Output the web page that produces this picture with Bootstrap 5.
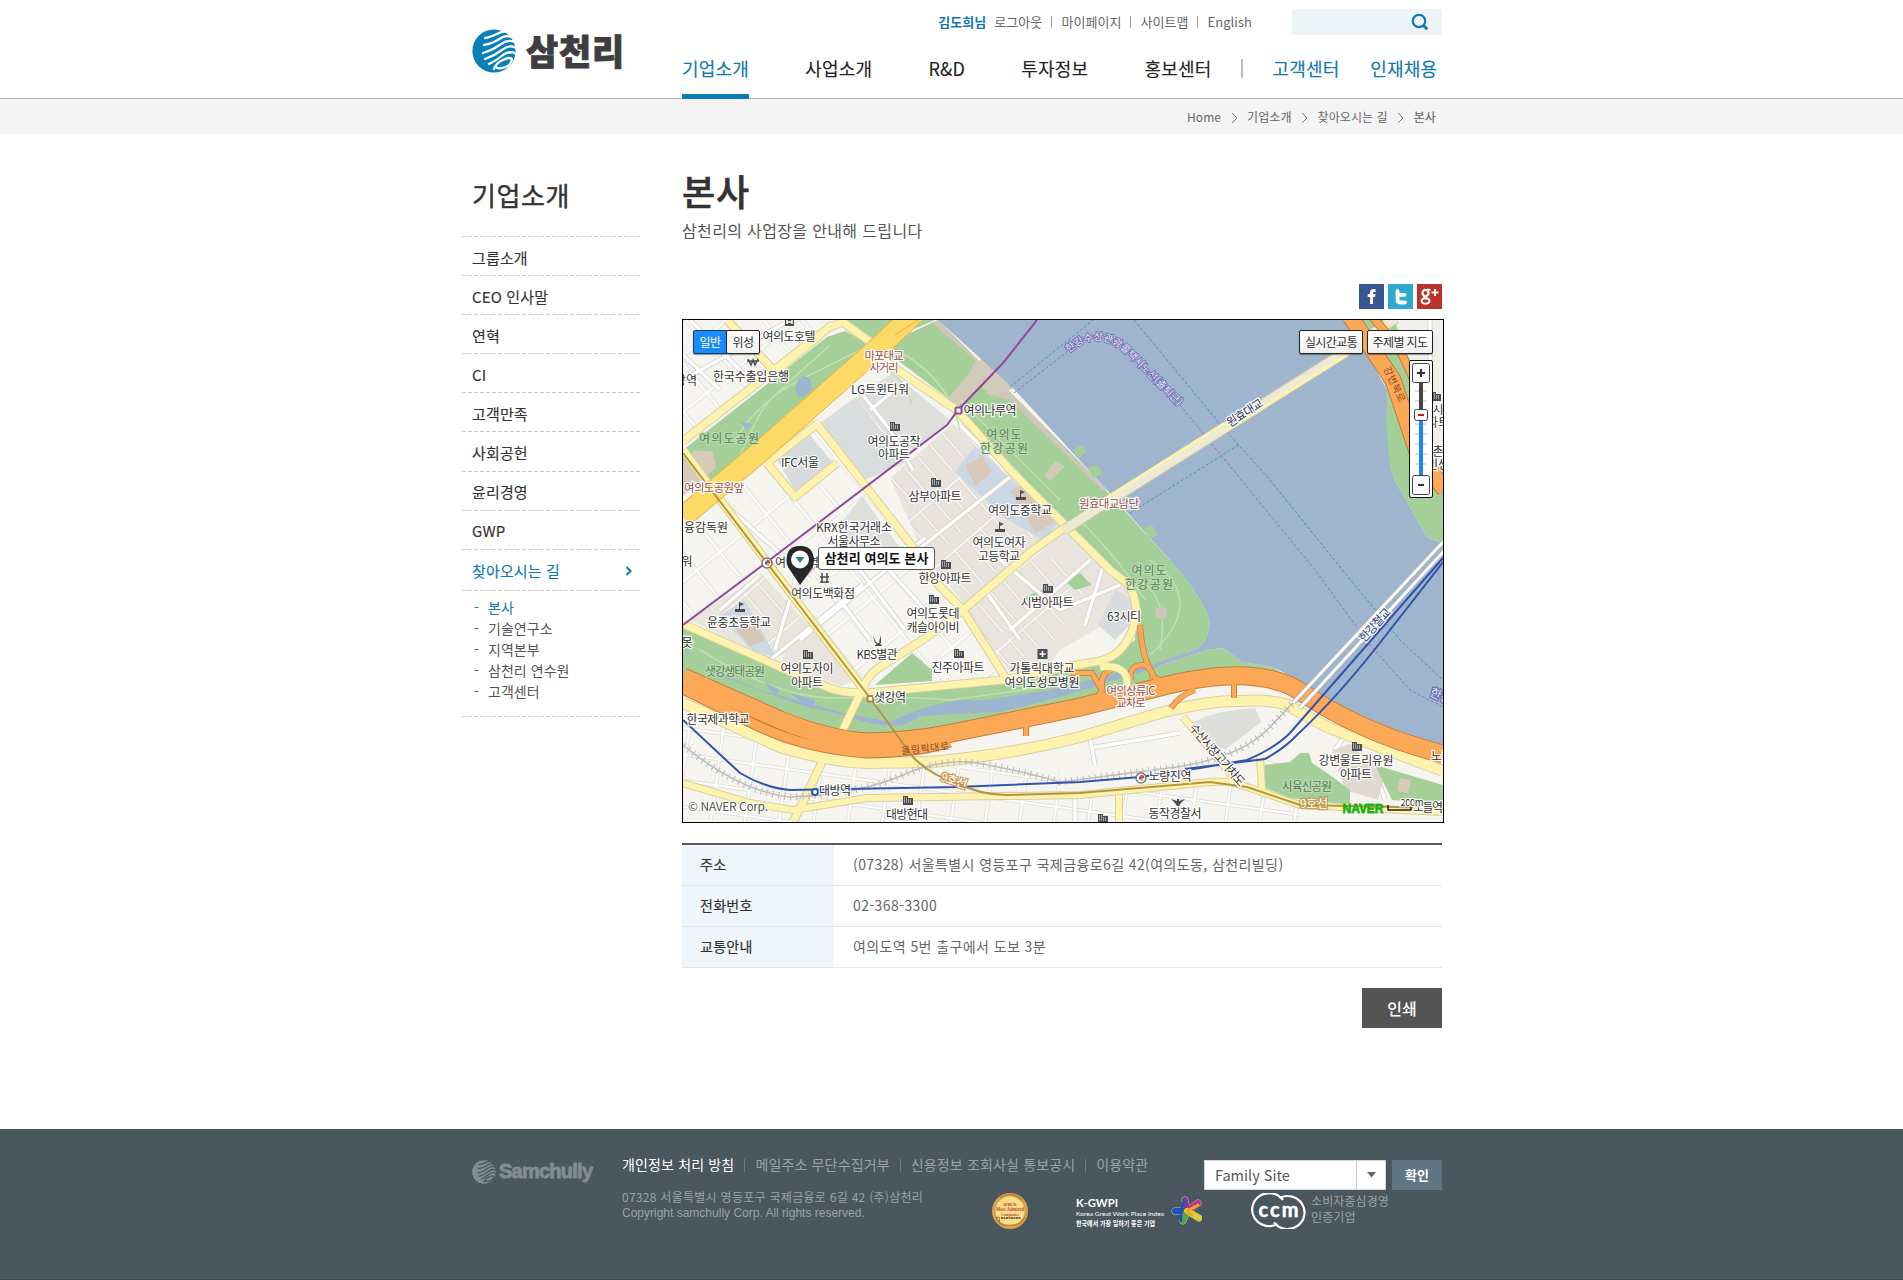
<!DOCTYPE html>
<html lang="ko">
<head>
<meta charset="utf-8">
<title>본사 | 삼천리</title>
<meta name="viewport" content="width=device-width, initial-scale=1">
<link rel="stylesheet" href="https://cdn.jsdelivr.net/npm/bootstrap@5.3.0/dist/css/bootstrap.min.css">
<style>
body{font-family:"Noto Sans CJK KR","Liberation Sans",sans-serif;color:#333;line-height:1.2;overflow-x:hidden;font-size:14px}
a{text-decoration:none;color:inherit}
.wrap{width:980px;margin-left:calc(50% - 489.5px);white-space:nowrap}
.med{-webkit-text-stroke:.15px currentColor}
.blue{color:#0f78b2}
.site-head{height:99px;border-bottom:1px solid #b3b1b4}
.brand{width:220px;padding:29px 0 0 10px}
.brand-name{font-weight:900;font-size:35px;letter-spacing:.8px;color:#3e3e40;-webkit-text-stroke:.9px #3e3e40;line-height:42px;margin-left:10px}
.util{height:44px;font-size:13px;color:#666;letter-spacing:.05px}
.util i{width:1px;height:12px;background:#999;margin:0 9px}
.search{width:150px;height:26px;background:#edf4f8;margin-left:40px;padding-right:13px}
.gnb{height:54px;font-size:18px;letter-spacing:.2px;color:#222}
.gnb a{height:55px;padding-top:14px;margin-right:56.2px}
.gnb .on{border-bottom:5px solid #0a7cb8}
.gnb i{width:2px;height:19px;background:#bbb;margin:15px 30px 0 0}
.crumbs{height:35px;background:#f4f4f4;font-size:12px;color:#666;letter-spacing:.08px}
.crumbs .wrap{height:37px;padding-right:6px}
.crumbs svg{margin:0 9.5px}
.side{width:178px;padding-top:44px;flex:none}
.side h2{font-size:26px;font-weight:400;height:58px;margin:0;padding-left:10px;line-height:34px;letter-spacing:.6px;-webkit-text-stroke:.4px #333}
.menu a{display:flex;align-items:center;justify-content:space-between;height:39.1px;padding:3px 7px 0 10px;font-size:15px;letter-spacing:.15px;line-height:1}
.dash,.menu a{background:repeating-linear-gradient(90deg,#c9c9c9 0 4px,transparent 4px 6px) 0 0/100% 1px no-repeat}
.sub{height:126px;padding:7px 0 0 12px;line-height:21.1px;font-size:14px;color:#555;letter-spacing:.05px}
.sub span{display:inline-block;width:14px}
.shut{height:1px}
.main{width:762px;margin-left:42px;padding-top:33px;flex:none}
.main h1{font-size:36px;font-weight:500;margin:0;line-height:46px;height:52px;-webkit-text-stroke:.6px #333;letter-spacing:1px}
.leadin{font-size:16px;letter-spacing:.35px;color:#555;line-height:22px;height:65px}
.social{gap:4px;padding-right:2px;height:35px}
.map{width:762px;height:504px;border:1px solid #000;position:relative;background:#f5f4ee;overflow:hidden}
.map>svg{display:block}
.mbtn{position:absolute;height:24px;top:10px;border:1px solid #222;background:linear-gradient(#fff,#f0f0f2);font-size:12px;letter-spacing:-.6px;line-height:21px;text-align:center;border-radius:2px;box-shadow:0 1px 1px #0006}
.mbtn.sel{background:#1a8cfa;color:#fff;border-color:#123d75;border-radius:2px 0 0 2px}
.zoombar{position:absolute;left:726px;top:40px;width:24px;height:138px;background:#fff;border:1px solid #111;border-radius:2px}
.tip{position:absolute;left:135px;top:227px;width:117px;height:23px;border:1px solid #555;border-radius:3px;background:#fff;font-size:13px;font-weight:700;line-height:20px;text-align:center;color:#111;letter-spacing:.1px}
.info{width:760px;border-top:2px solid #5a5a5c;margin-top:20px}
.info .line-item{height:41px;border-bottom:1px solid #e2e4e6}
.info b{width:152px;background:#eff5fa;padding-left:18px;font-weight:400;-webkit-text-stroke:.2px #333;height:40px;line-height:39px;letter-spacing:.3px}
.info span{padding-left:19px;color:#666;line-height:39px;letter-spacing:.4px}
.print{width:80px;height:40px;background:#545454;color:#fff;font-size:16px;font-weight:500;border-radius:0;border:0;padding:0;margin:20px 2px 0 0}
.foot{margin-top:101px;height:151px;background:#4a575f;color:#9aa3a8;border-bottom:1px solid #3e484e}
.flogo{width:160px;padding:31px 0 0 10px}
.fname{font:700 20px "Liberation Sans",sans-serif;color:#818c93;-webkit-text-stroke:.9px #818c93;margin-left:3px;letter-spacing:-.75px}
.flinks{height:17px;margin-top:27px;letter-spacing:.15px}
.flinks i{width:1px;height:13px;background:#6f7b82;margin:3px 10px 0}
.faddr{font-size:12px;line-height:16px;margin-top:16px;letter-spacing:.28px}
.copy{font-family:"Liberation Sans",sans-serif;font-size:12px;letter-spacing:0}
.fam{width:182px;height:30px;background:#fff;border:1px solid #cfd5d8;color:#555;font-size:14.5px;padding-left:10px}
.fam div{width:29px;border-left:1px solid #ccc;height:28px}
.okbtn{width:50px;height:30px;background:#607684;color:#fff;font-size:13px;font-weight:700;border:0;border-radius:0;padding:0;margin-left:6px}
/* map layers */
.cs,.fl{fill:none;stroke-linejoin:round;stroke-linecap:butt}
.cs{stroke:#d9cfa0}.fl{stroke:#fdf3ae}
.st{fill:none;stroke:#d2d0ca;stroke-width:5}.stw{fill:none;stroke:#fff;stroke-width:3.4}
.lb text{font-size:12px;fill:#333;stroke:#fff;stroke-width:2.6px;stroke-opacity:.85;paint-order:stroke;text-anchor:middle}
.lb .g{fill:#55805c;stroke:#c5dfb8;stroke-opacity:.6}
.lb .r{fill:#96504f;font-size:11.5px}
</style>
<script src="https://cdn.jsdelivr.net/npm/bootstrap@5.3.0/dist/js/bootstrap.bundle.min.js"></script>
</head>
<body>
<svg width="0" height="0" class="position-absolute"><defs>
<symbol id="globe" viewBox="0 0 44 44"><circle cx="22" cy="22" r="21.6" fill="currentColor"/>
<g fill="none" stroke="var(--gap,#fff)" stroke-width="2.3" stroke-linecap="round"><path d="M13 9Q19 8 27 4Q31 2 35 3"/><path d="M12 16Q22 14 29 9Q34 6 39 8"/><path d="M11 24Q21 21 29 15Q36 10 43 13"/><path d="M13 30Q22 27 30 21Q37 15 44 19"/><path d="M17 35Q24 32 31 26Q38 21 45 25"/><path d="M22 40Q24 34 31 31Q39 27 40 31Q38 38 30 39Q25 40 24 38"/></g></symbol>
</defs></svg>

<header class="site-head"><div class="wrap d-flex">
  <a class="brand d-flex" href="#"><svg width="44" height="44" style="color:#087fb9"><use href="#globe"/></svg><span class="brand-name">삼천리</span></a>
  <div class="flex-grow-1">
    <div class="util d-flex align-items-center justify-content-end"><b class="blue me-2">김도희님</b><a href="#">로그아웃</a><i></i><a href="#">마이페이지</a><i></i><a href="#">사이트맵</a><i></i><a href="#">English</a>
      <div class="search d-flex align-items-center justify-content-end"><svg width="18" height="18" viewBox="0 0 18 18" fill="none" stroke="#0f7cb6"><circle cx="8" cy="8" r="6.2" stroke-width="2.2"/><path d="M12 12l4.3 4.3" stroke-width="3"/></svg></div></div>
    <nav class="gnb d-flex med"><a class="on blue" href="#">기업소개</a><a href="#">사업소개</a><a href="#">R&amp;D</a><a href="#">투자정보</a><a class="me-0" href="#">홍보센터</a><i style="margin-left:29px"></i><a class="blue" style="margin-right:30.500px" href="#">고객센터</a><a class="blue me-0" href="#">인재채용</a></nav>
  </div>
</div></header>

<div class="crumbs"><div class="wrap d-flex align-items-center justify-content-end">
<span>Home</span><svg width="7" height="10"><path d="M1 0l5 5-5 5" fill="none" stroke="#777"/></svg><span>기업소개</span><svg width="7" height="10"><path d="M1 0l5 5-5 5" fill="none" stroke="#777"/></svg><span>찾아오시는 길</span><svg width="7" height="10"><path d="M1 0l5 5-5 5" fill="none" stroke="#777"/></svg><span class="med">본사</span>
</div></div>

<div class="wrap d-flex">
  <aside class="side">
    <h2>기업소개</h2>
    <nav class="menu med"><a href="#">그룹소개</a><a href="#">CEO 인사말</a><a href="#">연혁</a><a href="#">CI</a><a href="#">고객만족</a><a href="#">사회공헌</a><a href="#">윤리경영</a><a href="#">GWP</a><a class="blue" href="#" style="height:41px">찾아오시는 길<svg width="8" height="10"><path d="M1.5 1l4 4-4 4" fill="none" stroke="#0f78b2" stroke-width="2"/></svg></a></nav>
    <div class="sub dash"><div class="blue"><span>-</span>본사</div><div><span>-</span>기술연구소</div><div><span>-</span>지역본부</div><div><span>-</span>삼천리 연수원</div><div><span>-</span>고객센터</div></div>
    <div class="shut dash"></div>
  </aside>
  <main class="main">
    <h1>본사</h1>
    <div class="leadin">삼천리의 사업장을 안내해 드립니다</div>
    <div class="social d-flex justify-content-end">
      <svg width="25" height="25"><rect width="25" height="25" fill="#3a5795"/><path d="M11 20v-7H8.700V10H11V8.500Q11 5 14.500 5H16.500V8H15Q14 8 14 9V10H16.500L16 13H14V20Z" fill="#fff"/></svg>
      <svg width="25" height="25"><rect width="25" height="25" fill="#2da9d2"/><path d="M9.500 7V15.500Q9.500 18.500 12.500 18.500H17M9.500 10.800H16.500" fill="none" stroke="#fff" stroke-width="3.800" stroke-linecap="round"/></svg>
      <svg width="25" height="25"><rect width="25" height="25" fill="#b93329"/><g fill="none" stroke="#fff"><ellipse cx="8.500" cy="9" rx="3" ry="3.200" stroke-width="2.200"/><ellipse cx="8.500" cy="17" rx="4" ry="2.700" stroke-width="2"/><path d="M8 12Q5.500 13.500 9.500 14.500M10 5.800H13.500M14.500 8.500H21.500M18 5V12" stroke-width="2"/></g></svg>
    </div>
    <div class="map">
<svg width="760" height="502" viewBox="683 320 760 502">
<defs>
<pattern id="gridA" width="30" height="44" patternUnits="userSpaceOnUse" patternTransform="rotate(-39)"><path d="M0 2H30M2 0V44" stroke="#cfcdc7" stroke-width="4.400"/><path d="M0 2H30M2 0V44" stroke="#fff" stroke-width="2.800"/></pattern>
<pattern id="gridB" width="17" height="52" patternUnits="userSpaceOnUse" patternTransform="rotate(-41)"><path d="M0 2H17M2 0V44" stroke="#d3cec6" stroke-width="3"/><path d="M0 2H17M2 0V44" stroke="#f7f5f0" stroke-width="1.800"/></pattern>
<pattern id="gridC" width="34" height="26" patternUnits="userSpaceOnUse" patternTransform="rotate(8)"><path d="M0 2H34M2 0V26" stroke="#cfcdc7" stroke-width="4"/><path d="M0 2H34M2 0V26" stroke="#fff" stroke-width="2.600"/></pattern>
<path id="peri" d="M827 328L843 322L877 347L893 367L957 410L1013 473L1063 523L1110 570L1127 583Q1140 600 1134 625Q1125 655 1100 661L1060 668L1003 680L867 693Q840 693 827 687L780 667L683 624"/>
<path id="r2" d="M1067 526L1033 550L963 610L927 637L877 669Q866 678 862 690L838 740M822 762L804 800L793 822"/>
<path id="r3" d="M817 424L863 483L913 547L927 573L963 610L1007 680M767 463L795 497L837 463M767 463L817 424M683 441L832 325M727 320L775 372L820 335"/>
<path id="r4" d="M683 703L780 747Q830 762 867 763L930 762Q1010 755 1080 737L1160 713Q1210 700 1240 701Q1270 699 1287 705L1327 727L1443 771"/>
<path id="r5" d="M683 783L750 803L793 810L867 798L1080 795L1210 782Q1230 780 1247 787L1300 805L1443 812M1260 757L1262 790M1183 717L1240 785M1119 795V822"/>
<path id="hw" d="M683 677L780 720Q830 740 867 742Q910 741 947 734L1080 707L1160 687Q1210 674 1247 676Q1275 678 1293 687L1327 708Q1380 738 1443 754"/>
<path id="hw2" d="M683 689L750 722Q800 748 867 753Q920 752 950 742"/>
<path id="ramp" d="M1140 625Q1142 660 1155 678L1175 688M1153 678Q1152 666 1142 665Q1128 666 1131 680M1070 673H1092L1102 690Q1100 672 1112 670M1102 690L1098 697M1234 684V698M1171 708Q1180 695 1195 690M1026 720V736"/>
<path id="rail" d="M1427 560L1293 703L1267 730Q1240 757 1177 767L1060 782Q1010 768 970 762Q940 760 910 772Q860 795 790 797Q740 792 683 745"/>
</defs>
<rect x="683" y="320" width="760" height="502" fill="#f5f4ee"/>
<path d="M683 320H938L877 347L817 424L913 547L1003 680L867 693L683 624Z" fill="url(#gridA)" opacity=".75"/>
<path d="M683 700L860 765L1060 770V822H683Z" fill="url(#gridC)" opacity=".7"/><path d="M1060 795L1230 785L1300 808V822H1060Z" fill="url(#gridC)" opacity=".8"/>
<path d="M1075 795V822M1090 738L1095 765M1090 748L1180 733M1350 728L1335 750L1345 775M1370 755L1385 800M1267 763L1290 770" class="st"/><path d="M1075 795V822M1090 738L1095 765M1090 748L1180 733M1350 728L1335 750L1345 775M1370 755L1385 800M1267 763L1290 770" class="stw"/>
<!-- built-up blocks -->
<path d="M890 478L953 424L1010 477L1063 525L966 606L925 556Z" fill="#e8e3dc"/>
<path d="M890 478L953 424L1010 477L1063 525L966 606L925 556Z" fill="url(#gridB)"/>
<path d="M966 612L1065 532L1130 590V625L1095 655L1010 672Z" fill="#e9e5de"/>
<path d="M966 612L1040 552L1090 580L1050 650L1010 672Z" fill="url(#gridB)"/>
<path d="M1060 650L1130 610L1130 635L1100 657L1050 664Z" fill="#f5f4ee"/>
<path d="M762 574L822 640L770 660L690 620Z" fill="#e9e4dc"/><path d="M762 574L800 617L770 645L700 608Z" fill="url(#gridB)"/>
<path d="M790 645L823 632L858 680L840 686L780 664Z" fill="#e9e4dc"/>
<path d="M719 616L745 600L776 657L752 650Z" fill="#cdd9e4"/><path d="M735 628L752 618L765 640L750 646Z" fill="#d5c6b6"/>
<path d="M820 423L856 397L905 463L864 480Z" fill="#dadddd"/><path d="M856 397L893 373L950 420L905 458Z" fill="#dedfdc"/>
<path d="M775 456L806 430L833 463L796 492Z" fill="#d8dbdb"/><path d="M840 525L862 496L900 548L880 560L845 555Z" fill="#dddfdd"/>
<path d="M955 472L975 446L1058 523L1043 540L1005 518Z" fill="#cbd7e2"/><path d="M966 465L982 456L992 472L975 486ZM1010 490L1025 485L1040 500L1022 511ZM1025 515L1040 507L1055 522L1035 533Z" fill="#d7c8b9"/>
<path d="M1188 728Q1200 712 1255 708L1261 722L1225 750Z" fill="#dddedb"/><path d="M1333 750L1350 744L1385 775L1378 800L1345 790Z" fill="#e0d9ce"/>
<path d="M1115 590L1133 600V622L1115 640L1098 625Z" fill="#d8dcde"/>
<!-- parks -->
<path d="M683 450L827 337L845 331L876 348L816 404L710 487L683 470Z" fill="#a5cf98"/><path d="M683 462L695 450L713 452L716 468L704 478L683 496Z" fill="#d7cab9"/>
<path d="M845 320H935L876 345Z" fill="#a5cf98"/>
<path d="M880 347L938 320L1080 462L1177 568Q1204 600 1210 623Q1208 645 1193 650L1157 667L1207 650L1223 648L1242 662L1273 667L1333 707L1397 733L1443 747V760L1320 708L1247 677L1060 713L867 742L683 675V627L780 670L867 697L1100 665L1135 640L1137 600L1110 568L1063 520L957 405Z" fill="#a5cf98"/>
<path d="M938 320L1107 490H1102L1010 400L990 395L970 372L975 360L932 323Z" fill="#cfc6ba"/><path d="M948 398L985 355L1015 388L990 396L980 385L960 408Z" fill="#d3cbb9"/><path d="M1044 475L1056 461L1065 466L1050 481Z" fill="#d3cbb9"/>
<path d="M875 685L912 653L932 670V681Z" fill="#a5cf98"/><path d="M1066 582L1080 573L1092 585L1075 590ZM1023 598L1045 588L1040 605Z" fill="#a5cf98"/>
<path d="M1264 765L1290 762L1300 753H1309L1312 763L1330 775L1350 790V805L1290 798L1265 788ZM1375 765L1443 785V805L1392 800Z" fill="#a5cf98"/>
<g fill="none" stroke="#c0dfb3" stroke-width="1.500"><path d="M735 440Q760 400 800 380T860 350M740 455Q760 410 770 400T830 345M770 430Q800 400 850 365M900 352Q950 380 960 430M960 400Q1010 450 1060 500M1140 580Q1170 600 1160 650M1150 560Q1210 600 1150 655M700 650Q780 700 840 698T950 700L1060 685M890 372Q905 380 912 405M1080 520Q1120 560 1145 600"/></g>
<circle cx="1161" cy="613" r="6" fill="#cfc6ba"/><path d="M1400 778L1411 780L1408 793L1397 791Z" fill="#d8cbb9"/>
<g fill="#9cb4d0"><path d="M798 380Q810 370 812 388Q800 405 795 390ZM741 422L752 424L746 430ZM764 682L780 690L775 695ZM790 693L815 700L812 710Z"/><path d="M683 645Q690 660 720 676L800 705L850 717Q900 735 920 716L1000 712L1060 697L1157 667L1193 650L1155 664L1050 690L985 700Q940 697 890 722L840 712L760 690L700 665Z"/></g>
<!-- Han river -->
<path d="M938 320L1013 388L1107 490L1177 568Q1204 600 1210 623Q1208 645 1193 650L1157 667L1207 650L1223 648L1242 662L1273 667L1307 685L1333 707L1397 733L1443 747V543L1427 537L1393 477L1387 390L1367 353L1343 320Z" fill="#9fb5ce"/>
<path d="M1343 320L1370 353L1387 390Q1385 450 1393 477L1427 537L1443 543V320Z" fill="#a5cf98"/><path d="M1395 320H1443V470L1418 440L1408 365Z" fill="#f0efe9"/>
<path d="M1073 450L1082 445L1086 452L1078 458ZM1087 468L1098 465L1102 474L1094 478ZM1144 527L1152 525L1158 535L1148 538Z" fill="#a5cf98"/>
<!-- ferry routes -->
<g fill="none" stroke-width="1" stroke-dasharray="3 2"><path d="M1010 387L1093 320M1134 320L1225 430L1270 480L1340 567L1400 640L1443 680M1130 513L1240 444" stroke="#3f97a4"/><path d="M1014 393L1072 348M1180 405L1315 570L1370 645L1410 690L1443 707" stroke="#8d75b8"/></g>
<!-- side streets -->
<path class="st" d="M683 380L790 320M683 355L720 390M690 320L745 375M720 500L810 580M863 395L890 430L913 470M870 410L905 382M920 548L1010 477M800 640L925 538M760 575L720 610M800 565L775 650M770 660L862 585M860 570L905 630M880 560L925 610M905 545L945 590M840 600L870 640M960 425L1000 465M1000 560L1060 610M985 590L1020 640M1010 630L1090 560M1105 560L1085 625M1060 610L1120 585"/>
<path class="stw" d="M683 380L790 320M683 355L720 390M690 320L745 375M720 500L810 580M863 395L890 430L913 470M870 410L905 382M920 548L1010 477M800 640L925 538M760 575L720 610M800 565L775 650M770 660L862 585M860 570L905 630M880 560L925 610M905 545L945 590M840 600L870 640M960 425L1000 465M1000 560L1060 610M985 590L1020 640M1010 630L1090 560M1105 560L1085 625M1060 610L1120 585"/>
<path d="M1430 320V400L1443 430M1415 350L1430 352" class="st"/><path d="M1430 320V400L1443 430M1415 350L1430 352" class="stw"/>
<!-- main roads -->
<g class="cs" stroke-width="9"><use href="#peri"/><use href="#r2"/><use href="#r3"/><use href="#r4" stroke-width="12"/><use href="#r5" stroke-width="8"/><path d="M683 450L767 562L868 695"/></g>
<g class="fl" stroke-width="7"><use href="#peri"/><use href="#r2"/><use href="#r3"/><use href="#r4" stroke-width="10"/><use href="#r5" stroke-width="6"/><path d="M683 450L767 562L868 695"/></g>
<path d="M683 517L760 452L880 346L918 310" fill="none" stroke="#e3b75c" stroke-width="22"/><path d="M683 517L760 452L880 346L918 310" fill="none" stroke="#fdd966" stroke-width="20"/><path d="M895 335L930 312" stroke="#e9a94d" stroke-width="1"/>
<path d="M1064 530L1087 515L1347 351L1396 318" fill="none" stroke="#cfc79e" stroke-width="11"/><path d="M1064 530L1087 515L1347 351L1396 318" fill="none" stroke="#ece9d5" stroke-width="9"/><path d="M1100 502L1225 423M1225 431L1347 355" fill="none" stroke="#fdf3ae" stroke-width="3"/>
<!-- expressways -->
<g fill="none" stroke="#c67b3a"><use href="#hw2" stroke-width="11"/><use href="#ramp" stroke-width="6"/><use href="#hw" stroke-width="19"/><path d="M1350 316L1393 380Q1410 430 1418 455L1445 490" stroke-width="17"/><path d="M1372 316L1400 350L1414 380" stroke-width="9"/></g>
<g fill="none" stroke="#fba857"><use href="#hw2" stroke-width="9"/><use href="#ramp" stroke-width="4.500"/><use href="#hw" stroke-width="17"/><path d="M1350 316L1393 380Q1410 430 1418 455L1445 490" stroke-width="15"/><path d="M1372 316L1400 350L1414 380" stroke-width="7"/></g>
<path d="M1100 667Q1122 664 1127 678V690" fill="none" stroke="#fdf3ae" stroke-width="7"/>
<!-- railways -->
<g fill="none"><use href="#rail" stroke="#b9b9b9" stroke-width="7" stroke-dasharray="1 5"/><use href="#rail" stroke="#bcbcbc" stroke-width="1.500"/><path d="M1444 541L1293 703M1444 551L1300 708" stroke="#a6b0b8" stroke-width="4.500"/><path d="M1444 541L1293 703M1444 551L1300 708" stroke="#fff" stroke-width="3"/>
<path d="M683 720L740 773Q765 788 790 790L957 787L1080 782L1140 777L1200 768L1247 760Q1275 748 1290 733L1443 558M1185 769L1265 759Q1285 748 1297 735Q1340 695 1390 630L1443 562" stroke="#3153ad" stroke-width="2"/>
<path d="M683 453L767 563L870 698L913 757Q930 775 957 783Q980 795 1007 795L1080 793L1210 782L1247 787L1300 805L1443 808" stroke="#b5953b" stroke-width="2"/>
<path d="M683 625L767 562L947 425L958 410L1003 363L1037 320" stroke="#91479b" stroke-width="2"/></g>
<g fill="#fff" stroke-width="2"><rect x="955.500" y="407.500" width="6" height="6" rx="1" stroke="#91479b"/><rect x="867.500" y="696" width="5.500" height="5.500" rx="1" stroke="#b5803b"/><circle cx="815" cy="792" r="3" stroke="#3153ad"/><circle cx="767" cy="563" r="5" stroke="#777" stroke-width="1.500"/><circle cx="1141" cy="778" r="5" stroke="#777" stroke-width="1.500"/></g>
<g><path d="M767 563v-3a3 3 0 0 1 3 3zM1141 778v-3a3 3 0 0 1 3 3z" fill="#d43" stroke="#d43"/><path d="M767 563h-2M1141 778h-2" stroke="#236bc4" stroke-width="3"/><path d="M767 565h2M1141 780h2" stroke="#e2ad1d" stroke-width="2"/></g>
<!-- place icons -->
<defs><symbol id="apt" viewBox="0 0 10 10"><path d="M0 1h5v2h5v7H0Z" fill="#4b4d52"/><path d="M1 3h3M1 5h8M1 7h8" stroke="#fff" stroke-dasharray="1 1"/></symbol><symbol id="sch" viewBox="0 0 10 10"><path d="M0 7h10v3H0ZM4 7V0l5 2-4 2v3" fill="#4b4d52"/></symbol></defs>
<g><use href="#apt" x="890" y="421" width="10" height="10"/><use href="#apt" x="931" y="477" width="10" height="10"/><use href="#apt" x="941" y="559" width="10" height="10"/><use href="#apt" x="929" y="594" width="10" height="10"/><use href="#apt" x="1043" y="583" width="10" height="10"/><use href="#apt" x="954" y="648" width="10" height="10"/><use href="#apt" x="803" y="649" width="10" height="10"/><use href="#apt" x="903" y="795" width="10" height="10"/><use href="#apt" x="1352" y="741" width="10" height="10"/><use href="#apt" x="1098" y="813" width="10" height="10"/><use href="#apt" x="1431" y="391" width="10" height="10"/><use href="#sch" x="1016" y="490" width="10" height="10"/><use href="#sch" x="995" y="522" width="10" height="10"/><use href="#sch" x="735" y="602" width="10" height="10"/>
<path d="M785 320h9v6h-9zM1037.500 649h10v10h-10z" fill="#4b4d52"/><path d="M787 320v4M792 320v4M787 322h5M1042.500 651v6M1039.500 654h6" stroke="#fff" stroke-width="1.500"/><path d="M748 359l3 6 2-5 2 5 3-6M747 361h12M820 577h9M820 582h9M822 573v10M827 573v10" fill="none" stroke="#4b4d52" stroke-width="1.500"/><path d="M873 636l3 6h3l2-7v8h-6zM877 642l-2 4h7l-3-4zM1171 799l6 2v-2h2v2l6-2-4 4-2 3h-2l-2-3z" fill="#4b4d52"/></g>
<g class="lb">
<text x="789" y="341" textLength="53">여의도호텔</text><text x="751" y="381" textLength="76">한국수출입은행</text><text x="686" y="385" textLength="22">방역</text>
<text x="884" y="360" class="r" textLength="39">마포대교</text><text x="884" y="372" class="r" textLength="29">사거리</text><text x="880" y="394" textLength="58">LG트윈타워</text>
<text x="990" y="415" textLength="53">여의나루역</text><text x="729" y="443" class="g" textLength="60">여의도공원</text><text x="800" y="467" textLength="38">IFC서울</text><text x="894" y="446" textLength="53">여의도공작</text><text x="894" y="459" textLength="32">아파트</text>
<text x="1004" y="439" class="g" textLength="35">여의도</text><text x="1004" y="453" class="g" textLength="48">한강공원</text><text x="714" y="492" class="r" textLength="60">여의도공원앞</text><text x="935" y="501" textLength="53">삼부아파트</text><text x="1020" y="515" textLength="64">여의도중학교</text><text x="706" y="532" textLength="44">융감독원</text>
<text x="854" y="532" textLength="76">KRX한국거래소</text><text x="854" y="546" textLength="53">서울사무소</text><text x="999" y="547" textLength="53">여의도여자</text><text x="999" y="561" textLength="42">고등학교</text><text x="687" y="566">워</text><text x="797" y="567" textLength="44">여의도역</text>
<text x="1109" y="508" class="r" textLength="60">원효대교남단</text><text x="945" y="583" textLength="53">한양아파트</text><text x="823" y="598" textLength="64">여의도백화점</text><text x="739" y="627" textLength="64">윤중초등학교</text><text x="687" y="647">못</text><text x="1047" y="607" textLength="53">시범아파트</text><text x="933" y="618" textLength="53">여의도롯데</text><text x="933" y="632" textLength="53">캐슬아이비</text><text x="877" y="659" textLength="41">KBS별관</text><text x="958" y="672" textLength="53">진주아파트</text><text x="1042" y="673" textLength="65">가톨릭대학교</text><text x="1042" y="687" textLength="75">여의도성모병원</text>
<text x="735" y="676" class="g" textLength="60">샛강생태공원</text><text x="807" y="673" textLength="53">여의도자이</text><text x="807" y="687" textLength="32">아파트</text><text x="890" y="702" textLength="32">샛강역</text><text x="718" y="724" textLength="63">한국제과학교</text><text x="1149" y="575" class="g" textLength="35">여의도</text><text x="1149" y="589" class="g" textLength="48">한강공원</text><text x="1124" y="621" textLength="34">63시티</text><text x="1131" y="695" class="r" textLength="49">여의상류IC</text><text x="1131" y="707" class="r" textLength="29">교차로</text>
<text x="835" y="795" textLength="32">대방역</text><text x="907" y="819" textLength="42">대방현대</text><text x="1170" y="781" textLength="43">노량진역</text><text x="1175" y="818" textLength="53">동작경찰서</text><text x="1356" y="765" textLength="75">강변울트리유원</text><text x="1356" y="779" textLength="32">아파트</text><text x="1307" y="791" class="g" textLength="50">사육신공원</text><text x="1314" y="808" style="fill:#fff;stroke:#c2954a" textLength="28">9호선</text><text x="1428" y="812" textLength="30">노들역</text><text x="1442" y="761">노량</text><text x="1438" y="414">시</text><text x="1438" y="427">파트</text><text x="1438" y="456">촌</text><text x="1438" y="469">민센</text>
<text transform="translate(925 748) rotate(-6)" x="0" y="4" style="fill:#8b4b24;stroke:none;font-size:10px" textLength="48">올림픽대로</text><text transform="translate(954 781) rotate(19)" x="0" y="4" style="fill:#fff;stroke:#c2954a" textLength="27">9호선</text>
<text transform="translate(1245 413) rotate(-33)" x="0" y="4" style="fill:#263b68" textLength="41">원효대교</text><text transform="translate(1375 625) rotate(-48)" x="0" y="4" style="fill:#27427c" textLength="41">한강철교</text><text transform="translate(1217 755) rotate(49)" x="0" y="4" textLength="78">수산시장고가차도</text><text transform="translate(1395 384) rotate(65)" x="0" y="4" style="fill:#8b4b24;stroke:none;font-size:10px" textLength="38">강변북로</text>
<path id="ferry" d="M1069 353Q1096 328 1124 352L1180 408" fill="none"/><text style="fill:#eceafc;stroke:#6a66ad;stroke-width:2px;font-size:10px;text-anchor:start"><textPath href="#ferry" textLength="138">한강수상관광콜택시노선(출퇴근)</textPath></text><text transform="translate(1439 700) rotate(25)" x="0" y="0" style="fill:#e4e2fa;stroke:#6a66ad">한강</text>
<text x="728" y="811" style="fill:#555" textLength="80">© NAVER Corp.</text>
<text x="1363" y="813" style="font:900 12px 'Liberation Sans',sans-serif;fill:#12b212;stroke:#12b212;stroke-width:.8px" textLength="41" lengthAdjust="spacingAndGlyphs">NAVER</text><text x="1412" y="806" style="font-size:9.500px" textLength="23">200m</text><path d="M1388 805V810H1411V807" fill="none" stroke="#222" stroke-width="1.500"/></g>
<!-- location marker -->
<path d="M800 584L818 565L810 570Z" fill="#0003"/><path d="M800 585L788 567Q783 546 800 546Q817 546 813 567Z" fill="#272729"/><circle cx="800" cy="560" r="13.500" fill="#272729"/><circle cx="800" cy="559.500" r="9" fill="#fff"/><path d="M795.500 557h9l-4.500 6z" fill="#278779"/>
</svg>
      <div class="mbtn sel" style="left:10px;width:34px">일반</div><div class="mbtn" style="left:43px;width:34px">위성</div>
      <div class="mbtn" style="left:616px;width:64px">실시간교통</div><div class="mbtn" style="left:684px;width:66px">주제별 지도</div>
      <div class="zoombar"><svg width="22" height="136" viewBox="0 0 22 136" class="d-block"><path d="M5 30h12M5 40h12M5 63h12M5 73h12M5 83h12M5 93h12M5 103h12" stroke="#bbb"/><path d="M11 20V55" stroke="#444" stroke-width="4"/><path d="M11 55V116" stroke="#1a87f5" stroke-width="4"/><g fill="#fafafc" stroke="#444"><rect x="2.500" y="2.500" width="17" height="19" rx="2"/><rect x="2.500" y="114.500" width="17" height="19" rx="2"/><rect x="4.500" y="48.500" width="13" height="11" rx="2"/></g><path d="M7 12h8M11 8v8M8 124h6" stroke="#333" stroke-width="2"/><path d="M8 54h6" stroke="#b22" stroke-width="2"/></svg></div>
      <div class="tip">삼천리 여의도 본사</div>
    </div>
    <div class="info">
      <div class="line-item d-flex"><b>주소</b><span>(07328) 서울특별시 영등포구 국제금융로6길 42(여의도동, 삼천리빌딩)</span></div>
      <div class="line-item d-flex"><b>전화번호</b><span>02-368-3300</span></div>
      <div class="line-item d-flex"><b>교통안내</b><span>여의도역 5번 출구에서 도보 3분</span></div>
    </div>
    <div class="d-flex justify-content-end"><button class="btn print">인쇄</button></div>
  </main>
</div>

<footer class="foot"><div class="wrap d-flex">
  <div class="flogo d-flex"><svg width="24" height="24" style="color:#818c93;--gap:#4a575f"><use href="#globe"/></svg><span class="fname">Samchully</span></div>
  <div style="width:582px">
    <div class="flinks d-flex"><a class="text-white" href="#">개인정보 처리 방침</a><i></i><a href="#">메일주소 무단수집거부</a><i></i><a href="#">신용정보 조회사실 통보공시</a><i></i><a href="#">이용약관</a></div>
    <div class="d-flex"><div class="faddr" style="width:368px"><div>07328 서울특별시 영등포구 국제금융로 6길 42 (주)삼천리</div><div class="copy">Copyright samchully Corp. All rights reserved.</div></div>
    <svg width="212" height="40" viewBox="990 1190 212 40" style="margin-top:17px" font-family="Noto Sans CJK KR">
      <circle cx="1010" cy="1211" r="18" fill="#d8a349"/><circle cx="1010" cy="1211" r="14.500" fill="#f8dd8c"/><path d="M1000 1198Q1011 1190 1022 1200M996 1217Q999 1227 1011 1225Q1020 1226 1025 1217M996 1218q5-3 3 5" fill="none" stroke="#b77c2c" stroke-width="1.200"/><g text-anchor="middle" fill="#c14c29" font-family="Liberation Serif" font-weight="700"><text x="1010" y="1206" font-size="4" textLength="13">KOREA'S</text><text x="1010" y="1211" font-size="5.500" textLength="28" lengthAdjust="spacingAndGlyphs">Most Admired</text><text x="1010" y="1216" font-size="4.500" textLength="18" lengthAdjust="spacingAndGlyphs">Companies</text></g><path d="M1001 1218h20" stroke="#5c3b20" stroke-width="1.500" stroke-dasharray="2 .5"/>
      <g fill="#fff"><text x="1076" y="1207" font-size="10.500" font-weight="700" font-family="Lato" textLength="42" lengthAdjust="spacingAndGlyphs">K-GWPI</text><text x="1076" y="1216" font-size="6.500" font-family="Lato" textLength="88" lengthAdjust="spacingAndGlyphs">Korea Great Work Place Index</text><text x="1076" y="1225.500" font-size="6.500" font-weight="700" textLength="79" lengthAdjust="spacingAndGlyphs">한국에서 가장 일하기 좋은 기업</text></g>
      <g fill="none" stroke-linecap="round"><path d="M1187 1211L1185 1200M1187 1211L1198 1203M1187 1211L1175 1211M1187 1211L1183 1221M1187 1211L1199 1218" stroke="#b8c2ca" stroke-width="7"/><path d="M1187 1211L1175 1211" stroke="#1d52b6" stroke-width="6"/><path d="M1187 1211L1183 1221" stroke="#4ca83b" stroke-width="6"/><path d="M1187 1211L1185 1200" stroke="#7b3aa0" stroke-width="6"/><path d="M1187 1211L1198 1203" stroke="#c02d91" stroke-width="6"/><path d="M1187 1211L1199 1218" stroke="#d9cf25" stroke-width="6"/><path d="M1181 1211l3-10M1181 1213l0 8" stroke="#1d52b6" stroke-width="2.500"/><path d="M1187 1211L1198 1205M1187 1211l5 4" stroke="#f2a721" stroke-width="3"/></g>
    </svg></div>
  </div>
  <div style="padding-top:31px">
    <div class="d-flex"><div class="fam d-flex align-items-center justify-content-between">Family Site<div class="d-flex align-items-center justify-content-center"><svg width="9" height="6"><path d="M0 0h9L4.500 5.500z" fill="#666"/></svg></div></div><button class="btn okbtn">확인</button></div>
    <div class="d-flex" style="padding:3px 0 0 46px"><svg width="57" height="36" viewBox="0 0 57 36"><g fill="none" stroke="#fff" stroke-width="2.200"><path d="M33 7A17 16.500 0 1 0 27.500 31"/><path d="M24 29.500A17 16.500 0 1 0 29.500 5"/></g><text x="28.500" y="23.500" font-family="Lato" font-weight="700" font-size="20" fill="#fff" stroke="#fff" stroke-width=".5" text-anchor="middle" textLength="40">ccm</text></svg><div style="font-size:12px;line-height:16px;padding:0 0 0 4px;letter-spacing:.1px">소비자중심경영<br>인증기업</div></div>
  </div>
</div></footer>
</body>
</html>
